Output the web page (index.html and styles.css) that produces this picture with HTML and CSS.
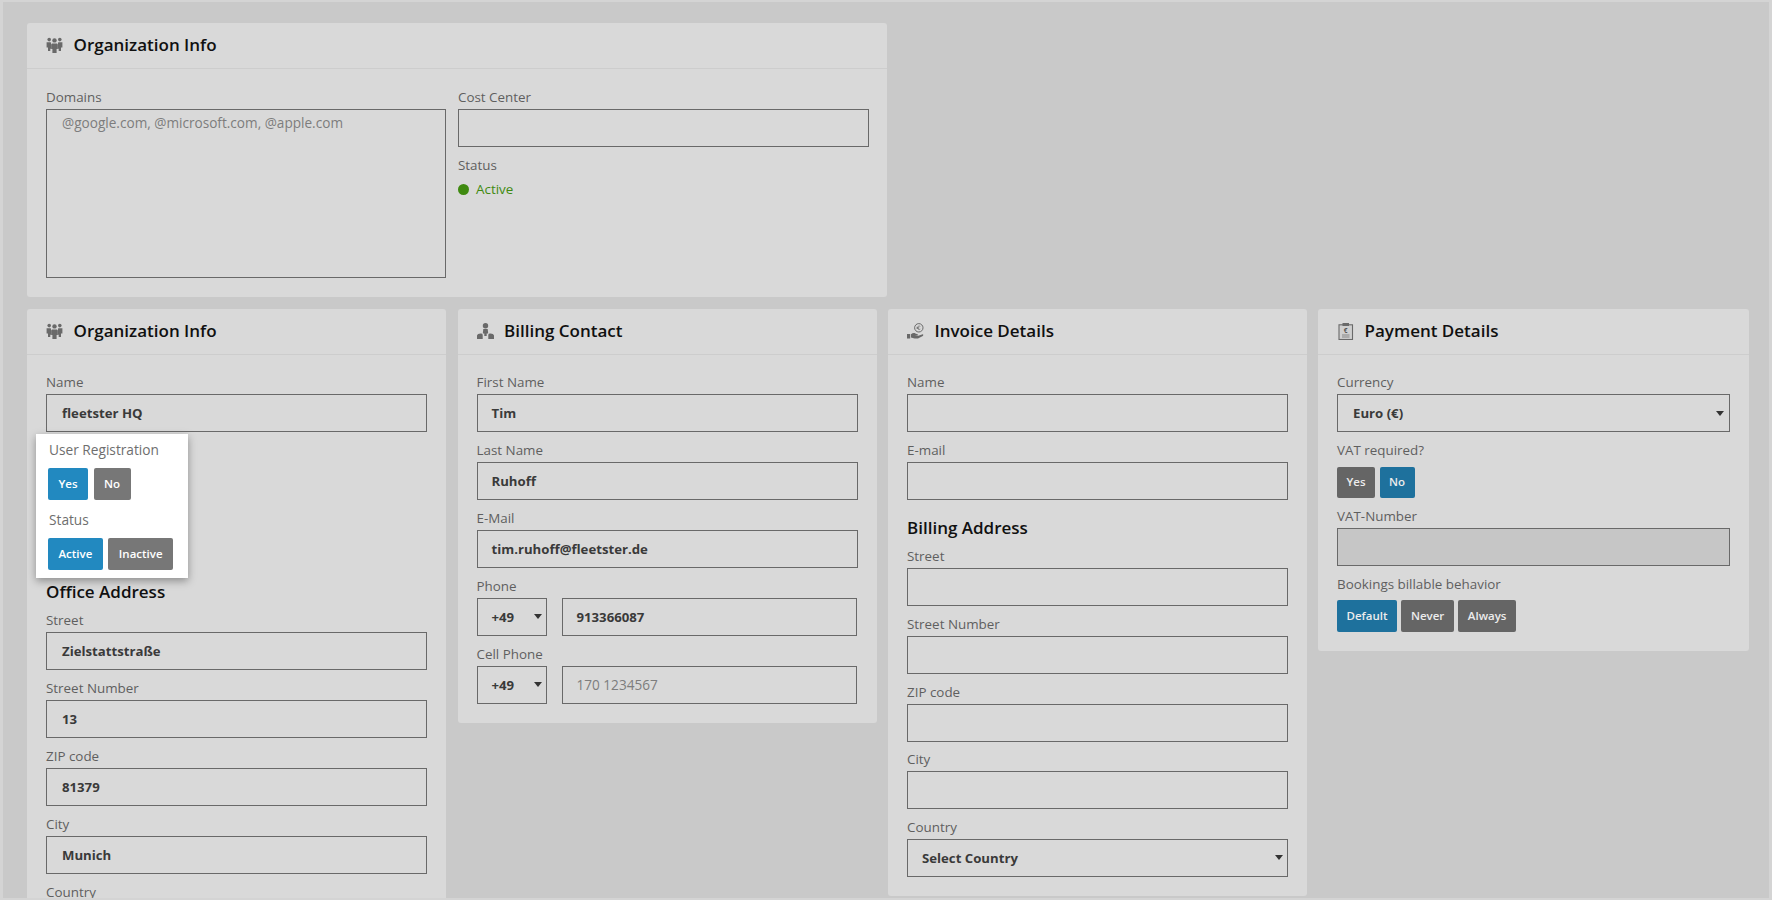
FILE: index.html
```html
<!DOCTYPE html>
<html lang="en">
<head>
<meta charset="utf-8">
<title>Organization settings</title>
<link rel="stylesheet" href="styles.css">
</head>
<body>
<div class="page">
  <section class="card card-wide card-roomy">
    <header class="card-head">
      <svg class="icon" viewBox="0 0 17 16"><circle cx="3.2" cy="2.6" r="1.8"/><circle cx="13.8" cy="2.6" r="1.8"/><circle cx="8.5" cy="3.4" r="2.2"/><path d="M.6 5.2h4.2l.4 2.2v4.4H4.3V14H2V10.6H.6zM16.4 5.2h-4.2l-.4 2.2v4.4h.9V14H15v-3.4h1.4z"/><path d="M6 6.4h5l.8 1.2v4.4h-1.2V16H6.400V12H5.200V7.600z"/></svg>
      <h2 class="card-title">Organization Info</h2>
    </header>
    <div class="card-body split">
      <div class="field">
        <div class="label">Domains</div>
        <div class="input textarea placeholder">@google.com, @microsoft.com, @apple.com</div>
      </div>
      <div class="split-col">
        <div class="field">
          <div class="label">Cost Center</div>
          <div class="input"></div>
        </div>
        <div class="field">
          <div class="label">Status</div>
          <div class="status"><span class="status-dot"></span>Active</div>
        </div>
      </div>
    </div>
  </section>

  <div class="columns">
    <section class="card card-roomy">
      <header class="card-head">
        <svg class="icon" viewBox="0 0 17 16"><circle cx="3.2" cy="2.6" r="1.8"/><circle cx="13.8" cy="2.6" r="1.8"/><circle cx="8.5" cy="3.4" r="2.2"/><path d="M.6 5.2h4.2l.4 2.2v4.4H4.3V14H2V10.6H.6zM16.4 5.2h-4.2l-.4 2.2v4.4h.9V14H15v-3.4h1.4z"/><path d="M6 6.4h5l.8 1.2v4.4h-1.2V16H6.400V12H5.200V7.600z"/></svg>
        <h2 class="card-title">Organization Info</h2>
      </header>
      <div class="card-body">
        <div class="field">
          <div class="label">Name</div>
          <div class="input value">fleetster HQ</div>
        </div>
        <div class="spotlight">
          <div class="spot-group">
            <div class="label">User Registration</div>
            <div class="btn-row btn-row-spot">
              <span class="btn btn-on">Yes</span>
              <span class="btn btn-off">No</span>
            </div>
          </div>
          <div class="spot-group">
            <div class="label">Status</div>
            <div class="btn-row btn-row-spot">
              <span class="btn btn-on">Active</span>
              <span class="btn btn-off">Inactive</span>
            </div>
          </div>
        </div>
        <h3 class="subhead">Office Address</h3>
        <div class="field">
          <div class="label">Street</div>
          <div class="input value">Zielstattstraße</div>
        </div>
        <div class="field">
          <div class="label">Street Number</div>
          <div class="input value">13</div>
        </div>
        <div class="field">
          <div class="label">ZIP code</div>
          <div class="input value">81379</div>
        </div>
        <div class="field">
          <div class="label">City</div>
          <div class="input value">Munich</div>
        </div>
        <div class="field">
          <div class="label">Country</div>
        </div>
      </div>
    </section>

    <section class="card">
      <header class="card-head">
        <svg class="icon" viewBox="0 0 17 16"><circle cx="8.500" cy="2.700" r="2.700"/><path d="M6.300 6h4.400l.5 4.500H9.700V13H7.300v-2.500H5.800z"/><path d="M3.500 10.500c1.200 0 2 .3 2.200 1.200V16H0v-3.500c.3-1.300 1.700-2 3.500-2zM13.500 10.500c-1.200 0-2 .3-2.200 1.200V16H17v-3.500c-.3-1.300-1.700-2-3.500-2z"/></svg>
        <h2 class="card-title">Billing Contact</h2>
      </header>
      <div class="card-body">
        <div class="field">
          <div class="label">First Name</div>
          <div class="input value">Tim</div>
        </div>
        <div class="field">
          <div class="label">Last Name</div>
          <div class="input value">Ruhoff</div>
        </div>
        <div class="field">
          <div class="label">E-Mail</div>
          <div class="input value">tim.ruhoff@fleetster.de</div>
        </div>
        <div class="field">
          <div class="label">Phone</div>
          <div class="phone">
            <div class="input select value">+49</div>
            <div class="input value">913366087</div>
          </div>
        </div>
        <div class="field">
          <div class="label">Cell Phone</div>
          <div class="phone">
            <div class="input select value">+49</div>
            <div class="input placeholder">170 1234567</div>
          </div>
        </div>
      </div>
    </section>

    <section class="card card-dense">
      <header class="card-head">
        <svg class="icon" viewBox="0 0 17 16"><rect x="0" y="11" width="3.200" height="4.500"/><path d="M4 11.200c1.500-1.200 3-1.500 4.300-.8l2.200.8c1 .4.700 1.500-.3 1.400l-2.400-.3 2.700.7 4.500-1.600c1.200-.4 1.900.8.800 1.500l-4.800 2.500H7.500L4 14.600z"/><circle class="icon-line" cx="11.800" cy="4.800" r="4.200"/><path class="icon-line thin" d="M13.300 3.400c-1.300-.9-2.800 0-2.800 1.400s1.500 2.300 2.800 1.400M9.500 4.300h2.700M9.500 5.400h2.700"/></svg>
        <h2 class="card-title">Invoice Details</h2>
      </header>
      <div class="card-body">
        <div class="field">
          <div class="label">Name</div>
          <div class="input"></div>
        </div>
        <div class="field">
          <div class="label">E-mail</div>
          <div class="input"></div>
        </div>
        <h3 class="subhead">Billing Address</h3>
        <div class="field">
          <div class="label">Street</div>
          <div class="input"></div>
        </div>
        <div class="field">
          <div class="label">Street Number</div>
          <div class="input"></div>
        </div>
        <div class="field">
          <div class="label">ZIP code</div>
          <div class="input"></div>
        </div>
        <div class="field">
          <div class="label">City</div>
          <div class="input"></div>
        </div>
        <div class="field">
          <div class="label">Country</div>
          <div class="input select value">Select Country</div>
        </div>
      </div>
    </section>

    <section class="card card-last card-roomy">
      <header class="card-head">
        <svg class="icon icon-clip" viewBox="0 0 17 17"><rect class="clip-sheet" x="2" y="1.800" width="13.500" height="14.700"/><rect x="5.500" y="0" width="6.500" height="3"/><text class="clip-text" x="8.700" y="9.600">€</text><path class="icon-line thin" d="M5 12h7.500M5 14h7.500"/></svg>
        <h2 class="card-title">Payment Details</h2>
      </header>
      <div class="card-body">
        <div class="field">
          <div class="label">Currency</div>
          <div class="input select value">Euro (€)</div>
        </div>
        <div class="field">
          <div class="label">VAT required?</div>
          <div class="btn-row btn-row-tight">
            <span class="btn btn-off">Yes</span>
            <span class="btn btn-on">No</span>
          </div>
        </div>
        <div class="field">
          <div class="label">VAT-Number</div>
          <div class="input disabled"></div>
        </div>
        <div class="field">
          <div class="label">Bookings billable behavior</div>
          <div class="btn-row">
            <span class="btn btn-on">Default</span>
            <span class="btn btn-off">Never</span>
            <span class="btn btn-off">Always</span>
          </div>
        </div>
      </div>
    </section>
  </div>
</div>
</body>
</html>
```

FILE: styles.css
```css
* {
  box-sizing: border-box;
}

html,
body {
  margin: 0;
  height: 100%;
}

body {
  font-family: "Open Sans", "Noto Sans", sans-serif;
  font-size: 13.400px;
  color: #3a3a3a;
}

.page {
  height: 900px;
  overflow: hidden;
  background: #c9c9c9;
  border: solid #d4d4d4;
  border-width: 2px 3px 2px 3px;
  padding: 21px 0 0 24px;
}

.card {
  flex: 0 0 419px;
  align-self: flex-start;
  background: #d9d9d9;
  border-radius: 3px;
}

.card-wide {
  width: 860px;
}

.card-last {
  flex-basis: 430.500px;
  margin-left: -.5px;
}

.card-head {
  display: flex;
  align-items: center;
  gap: 10.500px;
  height: 46px;
  padding: 0 19px 1px;
  border-bottom: 1px solid #cdcdcd;
}

.icon {
  flex: none;
  width: 17px;
  height: 16px;
  fill: #696969;
}

.icon-line {
  fill: none;
  stroke: #696969;
  stroke-width: 1;
}

.icon-line.thin {
  stroke-width: .7;
}

.icon-clip {
  height: 17px;
}

.clip-sheet {
  fill: #cfcfcf;
  stroke: #696969;
  stroke-width: 1.100;
}

.clip-text {
  font-size: 6.500px;
  font-weight: 700;
  text-anchor: middle;
  fill: #555;
}

.card-title {
  margin: 0;
  font-size: 17px;
  line-height: 22px;
  font-weight: 600;
  color: #101010;
}

.card-body {
  padding: 19px 19px 10px;
}

.split {
  display: flex;
  gap: 12px;
  padding-right: 18px;
}

.split > .field {
  flex: 0 0 400px;
}

.split-col {
  flex: 1;
}

.columns {
  display: flex;
  gap: 11.500px;
  margin-top: 12px;
}

.columns .card-body {
  padding-top: 18px;
}

.field {
  margin-bottom: 9px;
}

.card-dense .field {
  margin-bottom: 8.750px;
}

.card-dense .subhead {
  height: 38.500px;
}

.label {
  height: 18px;
  line-height: 18px;
  color: #5f5f5f;
}

.input {
  height: 38px;
  margin-top: 3px;
  padding: 0 14px;
  border: 1px solid #696969;
  line-height: 36px;
  white-space: nowrap;
  position: relative;
}

.card-roomy .input {
  padding-left: 15px;
}

.value {
  font-weight: 700;
  font-size: 13.200px;
  color: #3a3a3a;
}

.placeholder {
  font-size: 13.600px;
  color: #7d7d7d;
}

.textarea {
  height: 169px;
  line-height: 26px;
}

.disabled {
  background: #c6c6c6;
}

.select::after {
  content: "";
  position: absolute;
  top: 15px;
  right: 4px;
  border-style: solid;
  border-width: 5px 4.500px 0;
  border-color: #333 transparent transparent;
}

.card-last .select::after {
  top: 16px;
  right: 5px;
}

.phone {
  display: flex;
  gap: 15px;
  margin-right: 1px;
}

.phone .select {
  flex: 0 0 70px;
}

.phone .input:last-child {
  flex: 1;
}

.status {
  display: flex;
  align-items: center;
  gap: 7px;
  height: 18px;
  margin-top: 6px;
  color: #3f8a10;
}

.status-dot {
  width: 11px;
  height: 11px;
  border-radius: 50%;
  background: #3f8a10;
}

.btn-row {
  display: flex;
  gap: 4.500px;
  margin-top: 7px;
}

.btn-row-tight {
  margin-top: 8px;
}

.btn-row-spot {
  gap: 5.500px;
  margin-top: 9px;
}

.btn {
  height: 32px;
  padding: 0 9.500px;
  border-radius: 2px;
  font-size: 11.500px;
  font-weight: 600;
  line-height: 32px;
  color: #ececec;
}

.btn-row-tight .btn {
  height: 31px;
  line-height: 30px;
}

.btn-on {
  background: #1e719d;
}

.btn-off {
  background: #656565;
}

.spotlight {
  position: relative;
  z-index: 1;
  display: flex;
  flex-direction: column;
  gap: 11px;
  width: 152px;
  height: 144px;
  margin: -7px 0 -5px -10px;
  padding: 7px 12px 8px;
  background: #fff;
  box-shadow: 0 3px 8px rgba(0, 0, 0, .35);
}

.spotlight .label {
  padding-left: 1px;
  font-size: 13.700px;
  color: #6e6e6e;
}

.spotlight .btn {
  padding: 0 10.500px;
}

.spotlight .btn-on {
  background: #2289c0;
  color: #fff;
}

.spotlight .btn-off {
  background: #777;
  color: #fff;
}

.subhead {
  height: 38px;
  margin: 0;
  font-size: 17px;
  font-weight: 600;
  line-height: 38px;
  color: #101010;
}
```
